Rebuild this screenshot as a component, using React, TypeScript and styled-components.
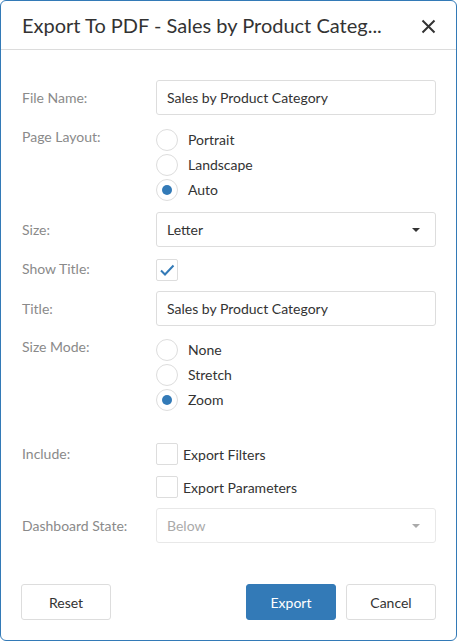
import styled, { createGlobalStyle } from "styled-components";

const GlobalStyle = createGlobalStyle`
	html, body {
		margin: 0;
		padding: 0;
		background: #fff;
	}
	* {
		box-sizing: border-box;
	}
	body {
		font-family: "Segoe UI", Lato, "Open Sans", sans-serif;
		font-size: 14px;
		color: #333;
	}
`;

const Dialog = styled.div`
	width: 457px;
	height: 641px;
	border: 1px solid #337ab7;
	border-radius: 6px;
	background: #fff;
	display: flex;
	flex-direction: column;
	overflow: hidden;
`;

const Header = styled.div`
	height: 49px;
	flex-shrink: 0;
	display: flex;
	align-items: center;
	justify-content: space-between;
	padding: 0 20px 0 21px;
	border-bottom: 1px solid #dcdcdc;
`;

const Title = styled.div`
	font-size: 20px;
	color: #333;
	white-space: nowrap;
	line-height: 26px;
`;

const CloseButton = styled.button`
	border: none;
	background: transparent;
	padding: 0;
	width: 16px;
	height: 16px;
	display: flex;
	align-items: center;
	justify-content: center;
	cursor: pointer;
	margin-top: 2px;
`;

const Body = styled.div`
	flex: 1;
	padding: 30px 20px 0 21px;
	display: flex;
	flex-direction: column;
`;

const Row = styled.div<{ $top?: number }>`
	display: grid;
	grid-template-columns: 134px 1fr;
	align-items: start;
	margin-top: ${(p) => p.$top ?? 0}px;
`;

const Label = styled.div<{ $lh: number }>`
	color: #8a8a8a;
	font-size: 14px;
	line-height: ${(p) => p.$lh}px;
`;

const TextBox = styled.input`
	width: 100%;
	height: 35px;
	border: 1px solid #ddd;
	border-radius: 3px;
	padding: 0 10px;
	font-family: inherit;
	font-size: 14px;
	color: #333;
	outline: none;
`;

const Select = styled.div<{ $disabled?: boolean }>`
	height: 35px;
	border: 1px solid ${(p) => (p.$disabled ? "#e8e8e8" : "#ddd")};
	border-radius: 3px;
	padding: 0 15px 0 10px;
	display: flex;
	align-items: center;
	justify-content: space-between;
	color: ${(p) => (p.$disabled ? "#aaa" : "#333")};
`;

const Caret = styled.span<{ $disabled?: boolean }>`
	width: 0;
	height: 0;
	border-left: 4px solid transparent;
	border-right: 4px solid transparent;
	border-top: 4px solid ${(p) => (p.$disabled ? "#aaa" : "#333")};
`;

const RadioGroup = styled.div`
	display: flex;
	flex-direction: column;
`;

const RadioItem = styled.label`
	height: 25px;
	display: flex;
	align-items: center;
	gap: 10px;
	color: #333;
`;

const RadioCircle = styled.span<{ $on?: boolean }>`
	width: 22px;
	height: 22px;
	border-radius: 50%;
	border: 1px solid #ddd;
	background: #fff;
	display: flex;
	align-items: center;
	justify-content: center;

	&::after {
		content: "";
		width: 10px;
		height: 10px;
		border-radius: 50%;
		background: ${(p) => (p.$on ? "#337ab7" : "transparent")};
	}
`;

const CheckGroup = styled.div`
	display: flex;
	flex-direction: column;
	gap: 11px;
`;

const CheckItem = styled.label`
	height: 22px;
	display: flex;
	align-items: center;
	gap: 5px;
	color: #333;
`;

const CheckBox = styled.span`
	width: 22px;
	height: 22px;
	border: 1px solid #ddd;
	border-radius: 2px;
	background: #fff;
	display: flex;
	align-items: center;
	justify-content: center;
`;

const Footer = styled.div`
	flex-shrink: 0;
	display: flex;
	align-items: center;
	padding: 0 20px 20px 20px;
`;

const Button = styled.button<{ $primary?: boolean }>`
	width: 90px;
	height: 36px;
	border-radius: 3px;
	font-family: inherit;
	font-size: 14px;
	cursor: pointer;
	border: 1px solid ${(p) => (p.$primary ? "#337ab7" : "#ddd")};
	background: ${(p) => (p.$primary ? "#337ab7" : "#fff")};
	color: ${(p) => (p.$primary ? "#fff" : "#333")};
`;

const Spacer = styled.div`
	flex: 1;
`;

const ButtonGap = styled.div`
	width: 10px;
`;

const Radio = ({ label, on }: { label: string; on?: boolean }) => (
	<RadioItem>
		<RadioCircle $on={on} />
		{label}
	</RadioItem>
);

const Check = ({ label, on }: { label?: string; on?: boolean }) => (
	<CheckItem>
		<CheckBox>
			{on && (
				<svg width="16" height="14" viewBox="0 0 16 14">
					<path
						d="M2 7.5 L6 11.5 L14.5 2.5"
						fill="none"
						stroke="#337ab7"
						strokeWidth="2"
					/>
				</svg>
			)}
		</CheckBox>
		{label}
	</CheckItem>
);

function App() {
	return (
		<>
			<GlobalStyle />
			<Dialog>
				<Header>
					<Title>Export To PDF - Sales by Product Categ...</Title>
					<CloseButton>
						<svg width="15" height="15" viewBox="0 0 15 15">
							<path
								d="M1.5 1.5 L13.5 13.5 M13.5 1.5 L1.5 13.5"
								stroke="#333"
								strokeWidth="2"
							/>
						</svg>
					</CloseButton>
				</Header>

				<Body>
					<Row>
						<Label $lh={35}>File Name:</Label>
						<TextBox defaultValue="Sales by Product Category" />
					</Row>

					<Row $top={12}>
						<Label $lh={20}>Page Layout:</Label>
						<RadioGroup>
							<Radio label="Portrait" />
							<Radio label="Landscape" />
							<Radio label="Auto" on />
						</RadioGroup>
					</Row>

					<Row $top={10}>
						<Label $lh={35}>Size:</Label>
						<Select>
							Letter
							<Caret />
						</Select>
					</Row>

					<Row $top={12}>
						<Label $lh={20}>Show Title:</Label>
						<Check on />
					</Row>

					<Row $top={10}>
						<Label $lh={35}>Title:</Label>
						<TextBox defaultValue="Sales by Product Category" />
					</Row>

					<Row $top={11}>
						<Label $lh={20}>Size Mode:</Label>
						<RadioGroup>
							<Radio label="None" />
							<Radio label="Stretch" />
							<Radio label="Zoom" on />
						</RadioGroup>
					</Row>

					<Row $top={31}>
						<Label $lh={22}>Include:</Label>
						<CheckGroup>
							<Check label="Export Filters" />
							<Check label="Export Parameters" />
						</CheckGroup>
					</Row>

					<Row $top={10}>
						<Label $lh={35}>Dashboard State:</Label>
						<Select $disabled>
							Below
							<Caret $disabled />
						</Select>
					</Row>
				</Body>

				<Footer>
					<Button>Reset</Button>
					<Spacer />
					<Button $primary>Export</Button>
					<ButtonGap />
					<Button>Cancel</Button>
				</Footer>
			</Dialog>
		</>
	);
}

export default App;
